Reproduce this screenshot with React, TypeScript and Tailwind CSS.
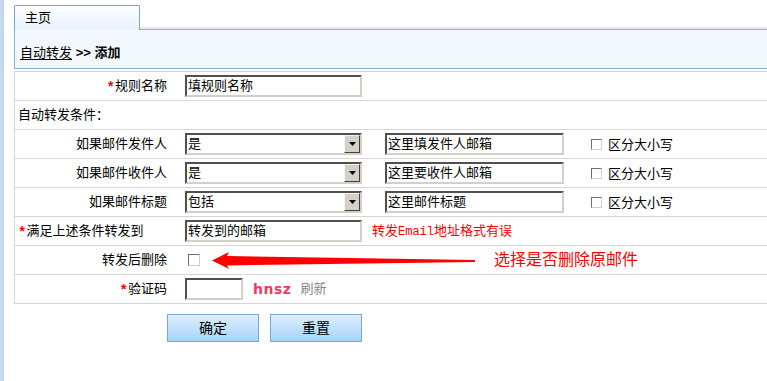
import type { ReactNode } from "react";

const ROW = "flex h-[29px] items-center border-b border-[#d6d6d6]";

function Label({ children }: { children: ReactNode }) {
  return <div className="w-[162px] shrink-0 pr-[10px] text-right">{children}</div>;
}

function Req() {
  return <span className="relative top-[2px] font-['Liberation_Mono',monospace] text-[14px] font-bold text-[#ff0000]">*</span>;
}

function TextBox({ value, width }: { value?: string; width: string }) {
  return (
    <div
      className={`flex h-[22px] items-center border-2 border-b-[#d4d0c8] border-l-[#505050] border-r-[#d4d0c8] border-t-[#505050] bg-white pl-[1px] leading-[16px] text-black ${width}`}
    >
      {value}
    </div>
  );
}

function Select({ value }: { value: string }) {
  return (
    <div className="flex h-[22px] w-[177px] items-center border-2 border-b-[#d4d0c8] border-l-[#505050] border-r-[#d4d0c8] border-t-[#505050] bg-white">
      <span className="flex-1 pl-[1px] leading-[16px]">{value}</span>
      <span className="flex h-[18px] w-[16px] items-center justify-center border border-b-[#404040] border-l-[#f4f4f4] border-r-[#404040] border-t-[#f4f4f4] bg-[#d4d0c8]">
        <svg viewBox="0 0 7 4" className="h-[4px] w-[7px]" aria-hidden>
          <path d="M0 0h7L3.5 4Z" fill="#000" />
        </svg>
      </span>
    </div>
  );
}

function Check({ size }: { size: string }) {
  return (
    <span
      className={`inline-block shrink-0 border border-b-[#d4d0c8] border-l-[#707070] border-r-[#d4d0c8] border-t-[#707070] bg-white ${size}`}
    />
  );
}

function Arrow() {
  return (
    <svg viewBox="0 0 264 17" className="h-[17px] w-[264px] shrink-0" aria-hidden>
      <path d="M0 8.5 17 0 15 4 263 8 263 10 15 13.5 17 17Z" fill="#ff0000" />
    </svg>
  );
}

const conditions = [
  { label: "如果邮件发件人", select: "是", input: "这里填发件人邮箱" },
  { label: "如果邮件收件人", select: "是", input: "这里要收件人邮箱" },
  { label: "如果邮件标题", select: "包括", input: "这里邮件标题" },
];

export default function App() {
  return (
    <div className="flex h-[381px] overflow-hidden bg-white font-['Liberation_Sans','Noto_Sans_CJK_SC',sans-serif] text-[13px] text-black">
      <div className="w-[4px] shrink-0 bg-[#c3d9f1]" />
      <div className="ml-[10px] flex-1 pt-[5px]">
        {/* tab strip */}
        <div className="flex items-end">
          <div className="relative z-10 -mb-px h-[25px] w-[126px] rounded-t-[2px] border border-b-0 border-[#7ca3d6] bg-gradient-to-b from-[#fbfdff] to-[#eaf2fc] pl-[10px] pt-[4px] leading-[15px]">
            主页
          </div>
          <div className="h-[2px] flex-1 bg-[#dde7f6]" />
        </div>

        {/* breadcrumb bar */}
        <div className="h-[40px] border-y border-l border-[#8cb0e0] bg-[#f3f8fe] pl-[5px] pt-[15px] leading-[15px]">
          <span className="underline underline-offset-2">自动转发</span>
          <span className="font-bold"> &gt;&gt; 添加</span>
        </div>

        {/* form table */}
        <div className="mt-[2px] border-l border-t border-[#d6d6d6]">
          <div className={ROW}>
            <Label>
              <Req />
              规则名称
            </Label>
            <div className="pl-[8px]">
              <TextBox value="填规则名称" width="w-[177px]" />
            </div>
          </div>

          <div className={ROW}>
            <div className="pl-[3px]">自动转发条件：</div>
          </div>

          {conditions.map((c) => (
            <div key={c.label} className={ROW}>
              <Label>{c.label}</Label>
              <div className="flex items-center pl-[8px]">
                <Select value={c.select} />
                <div className="ml-[23px]">
                  <TextBox value={c.input} width="w-[179px]" />
                </div>
                <Check size="ml-[27px] h-[11px] w-[11px]" />
                <span className="ml-[6px] leading-[15px]">区分大小写</span>
              </div>
            </div>
          ))}

          <div className={ROW}>
            <div className="w-[162px] shrink-0 pl-[3px]">
              <Req />
              满足上述条件转发到
            </div>
            <div className="flex items-center pl-[8px]">
              <TextBox value="转发到的邮箱" width="w-[177px]" />
              <span className="ml-[10px] text-[#ff0000]">
                转发<span className="font-['Liberation_Mono',monospace] text-[12px]">Email</span>地址格式有误
              </span>
            </div>
          </div>

          <div className={ROW}>
            <Label>转发后删除</Label>
            <div className="flex items-center pl-[11px]">
              <Check size="h-[12px] w-[12px]" />
              <div className="ml-[12px] flex">
                <Arrow />
              </div>
              <span className="ml-[18px] text-[16px] leading-[20px] text-[#ff0000]">选择是否删除原邮件</span>
            </div>
          </div>

          <div className={ROW}>
            <Label>
              <Req />
              验证码
            </Label>
            <div className="flex items-center pl-[8px]">
              <TextBox width="w-[58px]" />
              <span className="ml-[10px] font-['DejaVu_Sans',sans-serif] text-[14px] font-bold tracking-[0.5px] text-[#ef3a64]">hnsz</span>
              <span className="ml-[9px] text-[#888888]">刷新</span>
            </div>
          </div>
        </div>

        {/* buttons */}
        <div className="ml-[153px] mt-[10px] flex gap-[11px]">
          <button
            type="button"
            className="h-[28px] w-[92px] border border-[#7ba6d8] bg-gradient-to-b from-[#ddf0fd] to-[#a6d3f8] text-[14px] text-black"
          >
            确定
          </button>
          <button
            type="button"
            className="h-[28px] w-[92px] border border-[#7ba6d8] bg-gradient-to-b from-[#ddf0fd] to-[#a6d3f8] text-[14px] text-black"
          >
            重置
          </button>
        </div>
      </div>
    </div>
  );
}
